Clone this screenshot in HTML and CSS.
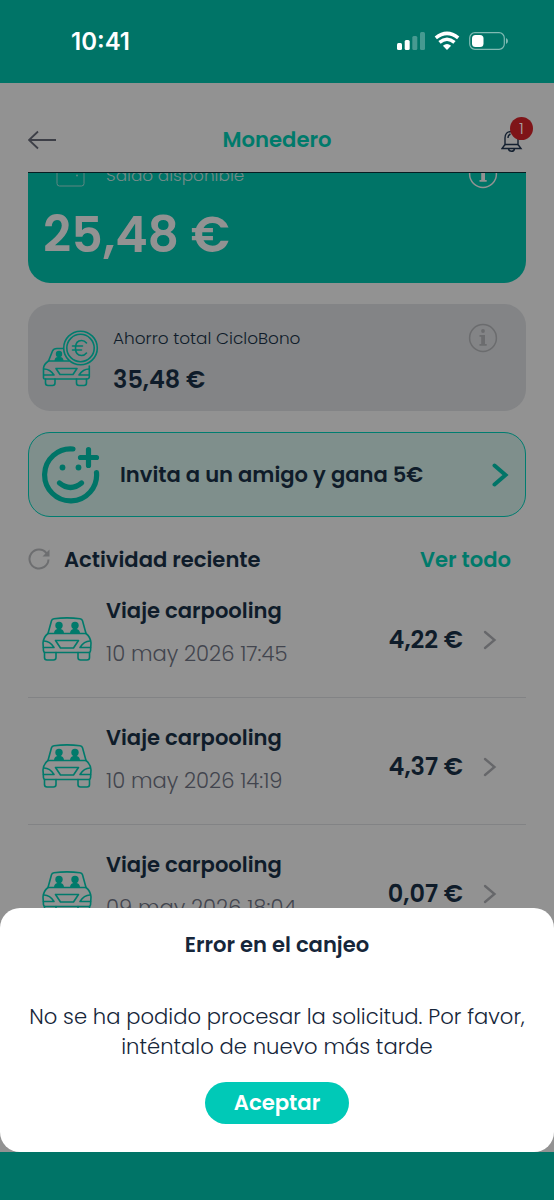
FILE: index.html
```html
<!DOCTYPE html>
<html lang="es">
<head>
<meta charset="utf-8">
<meta name="viewport" content="width=device-width, initial-scale=1">
<title>Monedero</title>
<link rel="stylesheet" href="styles.css">
</head>
<body>
<svg class="defs" aria-hidden="true">
  <symbol id="car" viewBox="0 0 50 44">
    <g fill="none" stroke="currentColor" stroke-width="1.6" stroke-linejoin="round" stroke-linecap="round">
      <path d="M6 16.500 L9.500 3.800 Q10 2 12 1.700 Q25 0 38 1.700 Q40 2 40.500 3.800 L44 16.500"/>
      <path d="M6 16.500 H44 Q48.500 20 49 26 L48.500 34 Q48.300 35.500 46.500 35.500 H3.500 Q1.700 35.500 1.500 34 L1 26 Q1.500 20 6 16.500Z"/>
      <path d="M13.500 23.500 H36.500 L31.500 31 H18.500Z"/>
      <path d="M2 24 Q8 24 12 30.500 H1.500 M48 24 Q42 24 38 30.500 H48.500"/>
      <path d="M2.500 35.500 V40.500 Q2.500 43 5 43 H11.500 Q14 43 14 40.500 V35.500 M36 35.500 V40.500 Q36 43 38.500 43 H45 Q47.500 43 47.500 40.500 V35.500"/>
    </g>
    <g fill="currentColor"><circle cx="17" cy="8.500" r="3.700"/><circle cx="33" cy="8.500" r="3.700"/><path d="M12 16.500 Q12 12.500 15.500 12 V10 H18.500 V12 Q22 12.500 22 16.500Z M28 16.500 Q28 12.500 31.500 12 V10 H34.500 V12 Q38 12.500 38 16.500Z"/></g>
  </symbol>
  <symbol id="info" viewBox="0 0 30 30">
    <circle cx="15" cy="15" r="13.400" fill="none" stroke="currentColor" stroke-width="1.500"/>
    <circle cx="15" cy="8" r="1.900" fill="currentColor"/>
    <path d="M11.500 12 H17 V21 H18.700 V22.800 H11.500 V21 H13.200 V13.700 H11.500Z" fill="currentColor"/>
  </symbol>
  <symbol id="chevron" viewBox="0 0 14 20"><path d="M2 2 L11.500 10 L2 18" fill="none" stroke="currentColor" stroke-width="2.300" stroke-linecap="round"/></symbol>
</svg>
<div class="screen">
  <div class="status">
    <span class="time">10:41</span>
    <svg class="indicators" viewBox="0 0 112 20">
      <g fill="#fff">
        <rect x="0" y="12" width="5" height="7" rx="1.500"/><rect x="7.700" y="9" width="5" height="10" rx="1.500"/>
        <rect x="15.300" y="5" width="5" height="14" rx="1.500" opacity=".28"/><rect x="23" y="1" width="5" height="18" rx="1.500" opacity=".28"/>
        <rect x="75" y="4" width="11.500" height="12" rx="3.500"/>
      </g>
      <g fill="none" stroke="#fff" stroke-width="3.600"><path d="M38.800 6.800 Q50 -2.200 61.200 6.800"/><path d="M42.500 11.300 Q50 5.200 57.500 11.300"/></g>
      <path d="M45.900 14.800 Q50 11.400 54.100 14.800 L50 19Z" fill="#fff"/>
      <rect x="72.700" y="1.700" width="34.600" height="16.600" rx="5.200" fill="none" stroke="#fff" stroke-width="1.200" opacity=".5"/>
      <path d="M109 7 Q111 8 111 10 Q111 12 109 13Z" fill="#fff" opacity=".5"/>
    </svg>
  </div>
  <header class="header">
    <svg class="back" viewBox="0 0 30 20"><path d="M10 1.500 L1 10 L10 18.500 M1 10 H28" fill="none" stroke="currentColor" stroke-width="1.800"/></svg>
    <h1 class="title">Monedero</h1>
    <div class="bell">
      <svg viewBox="0 0 22 24"><path d="M4 17.500 V10 Q4 3.500 10.500 3.500 Q17 3.500 17 10 V17.500 M4 16.500 H17 L20 20.500 H1 L4 16.500 M7.500 21 Q8 23.300 10.500 23.300 Q13 23.300 13.500 21 M7 10 Q7 7 9.500 6" fill="none" stroke="currentColor" stroke-width="1.400"/></svg>
      <span class="badge">1</span>
    </div>
  </header>
  <main class="content">
    <section class="balance">
      <div class="balance-head">
        <svg class="wallet" viewBox="0 0 30 26"><rect x="1" y="1" width="27" height="24" rx="2.500" fill="none" stroke="currentColor" stroke-width="1"/><circle cx="21" cy="14.500" r="1" fill="currentColor"/></svg>
        <span class="balance-label">Saldo disponible</span>
        <svg class="info"><use href="#info"/></svg>
      </div>
      <div class="balance-value">25,48 €</div>
    </section>
    <section class="saving">
      <svg class="saving-icon" viewBox="0 0 58 58">
        <g fill="none" stroke="currentColor" stroke-width="1.600" stroke-linejoin="round" stroke-linecap="round">
          <path d="M21 18.500 H15 Q11.500 18.500 10.500 21 L6.500 31 H27"/>
          <path d="M6.500 31 Q2 34 1.500 38 V48 Q1.500 49 3 49 H45 Q47 49 47.300 47 V36"/>
          <path d="M14 38.500 H35 L31 44.500 H18Z M2 39 Q8 39 12 45 H2 M47 39 Q41 39 37 45 H47 M3.500 49 V53 Q3.500 55.500 6 55.500 H10.500 Q13 55.500 13 53 V49 M34.500 49 V53 Q34.500 55.500 37 55.500 H42 Q44.500 55.500 44.500 53 V49"/>
          <circle cx="38.500" cy="18" r="16.800"/><circle cx="38.500" cy="18" r="13.700"/>
          <path d="M44.500 13 Q42.500 10.500 39.500 10.500 Q33.500 10.500 33.500 18 Q33.500 25.500 39.500 25.500 Q42.500 25.500 44.500 23 M30.500 16 H40.500 M30.500 20 H39.500"/>
        </g>
        <g fill="currentColor"><circle cx="17" cy="24" r="3.200"/><path d="M12.500 31 Q12.500 27 16 27 H18 Q21.500 27 21.500 31Z"/></g>
      </svg>
      <div class="saving-text"><span class="saving-label">Ahorro total CicloBono</span><strong class="saving-value">35,48 €</strong></div>
      <svg class="info muted"><use href="#info"/></svg>
    </section>
    <section class="invite">
      <svg class="smile" viewBox="0 0 58 58"><g fill="none" stroke="currentColor" stroke-width="5.200" stroke-linecap="round"><path d="M31 3 A26 26 0 1 0 54.500 26.500 M17.500 37 Q28.500 46 39.500 37 M46.500 3.500 V19.500 M38.500 11.500 H54.500"/></g><circle cx="20.500" cy="21.500" r="2.900" fill="currentColor"/><circle cx="36.500" cy="21.500" r="2.900" fill="currentColor"/></svg>
      <span class="invite-text">Invita a un amigo y gana 5€</span>
      <svg class="invite-go" viewBox="0 0 17 24"><path d="M2.500 2.500 L13.500 12 L2.500 21.500" fill="none" stroke="currentColor" stroke-width="4" stroke-linecap="round"/></svg>
    </section>
    <div class="activity-head">
      <svg class="refresh" viewBox="0 0 22 22"><path d="M18.600 5.300 A9.500 9.500 0 1 0 20.500 11.500" fill="none" stroke="currentColor" stroke-width="2"/><path d="M21.500 1.500 V8.500 H14.500Z" fill="currentColor"/></svg>
      <h2 class="activity-title">Actividad reciente</h2>
      <a class="all">Ver todo</a>
    </div>
    <div class="trip"><svg class="car"><use href="#car"/></svg><div class="trip-text"><strong class="trip-name">Viaje carpooling</strong><span class="trip-date">10 may 2026 17:45</span></div><span class="amount">4,22 €</span><svg class="chevron"><use href="#chevron"/></svg></div>
    <div class="trip"><svg class="car"><use href="#car"/></svg><div class="trip-text"><strong class="trip-name">Viaje carpooling</strong><span class="trip-date">10 may 2026 14:19</span></div><span class="amount">4,37 €</span><svg class="chevron"><use href="#chevron"/></svg></div>
    <div class="trip"><svg class="car"><use href="#car"/></svg><div class="trip-text"><strong class="trip-name">Viaje carpooling</strong><span class="trip-date">09 may 2026 18:04</span></div><span class="amount">0,07 €</span><svg class="chevron"><use href="#chevron"/></svg></div>
  </main>
  <div class="sheet" role="dialog">
    <h2 class="sheet-title">Error en el canjeo</h2>
    <p class="sheet-text">No se ha podido procesar la solicitud. Por favor,<br>inténtalo de nuevo más tarde</p>
    <button class="accept">Aceptar</button>
  </div>
  <div class="bottom"></div>
</div>
</body>
</html>
```
FILE: styles.css
```css
* { box-sizing: border-box; margin: 0; padding: 0; }
body { font-family: Poppins, Inter, "Open Sans", sans-serif; color: #0f1c2a; background: #929292; }
.defs { position: absolute; width: 0; height: 0; }
svg { display: block; flex: none; }
span, strong, a, h1, h2, p { white-space: nowrap; }
.screen { position: relative; width: 554px; height: 1200px; overflow: hidden; display: flex; flex-direction: column; }
.status { height: 83px; flex: none; background: #007467; display: flex; justify-content: space-between; align-items: flex-start; padding: 31px 45px 0 71px; }
.time { color: #fff; font: 600 24px/22px Inter, sans-serif; letter-spacing: 0; }
.indicators { width: 112px; height: 20px; }
.header { height: 89px; flex: none; display: grid; grid-template-columns: 60px 1fr 60px; align-items: center; padding: 24px 28px 0; }
.back { width: 30px; height: 20px; color: #3d3f47; }
.title { font-size: 21.150px; font-weight: 600; color: #007a6b; text-align: center; line-height: 30px; }
.bell { position: relative; justify-self: end; width: 25px; height: 24px; color: #142030; }
.bell svg { width: 22px; height: 24px; }
.badge { position: absolute; left: 9px; top: -11px; width: 23px; height: 23px; border-radius: 50%; background: #7f1418; color: #a9a0a0; font-size: 16.500px; font-weight: 300; line-height: 23px; text-align: center; }
.content { flex: 1; min-height: 0; overflow: hidden; padding: 0 28px; }
.balance { height: 111px; background: #007467; border-top: 1px solid #071d22; border-radius: 0 0 22px 22px; padding: 0 28px 0 15px; color: #929292; overflow: hidden; }
.balance-head { display: flex; align-items: flex-end; height: 30px; margin-top: -14px; }
.wallet { width: 30px; height: 26px; margin: 0 0 2px 13px; opacity: .65; }
.balance-label { flex: 1; font-size: 16.900px; font-weight: 300; line-height: 24px; margin: 0 0 2px 20px; opacity: .8; }
.info { width: 30px; height: 30px; }
.balance-value { font-size: 49px; font-weight: 600; line-height: 60px; margin-top: 16px; }
.saving { height: 107px; margin-top: 21px; border-radius: 22px; background: #838486; display: flex; padding: 18px 28px 18px 14px; }
.saving-icon { width: 58px; height: 58px; margin-top: 8px; color: #007c6e; }
.saving-text { flex: 1; margin-left: 13px; display: flex; flex-direction: column; }
.saving-label { font-size: 16.900px; font-weight: 300; line-height: 30px; margin-top: 1px; }
.saving-value { font-size: 24px; font-weight: 600; line-height: 34px; margin-top: 10px; }
.muted { color: #6b6c6e; margin-top: 1px; }
.invite { height: 85px; margin-top: 21px; border-radius: 22px; border: 1.500px solid #007d70; background: #7f8f8c; display: flex; align-items: center; padding: 0 16px 0 13px; }
.smile { width: 58px; height: 58px; color: #007467; }
.invite-text { flex: 1; margin-left: 20px; font-size: 21.100px; font-weight: 600; }
.invite-go { width: 17px; height: 24px; color: #007467; }
.activity-head { display: flex; align-items: center; height: 30px; margin-top: 27px; padding-right: 15px; }
.refresh { width: 22px; height: 22px; color: #6d6e70; }
.activity-title { flex: 1; margin-left: 14px; font-size: 21.100px; font-weight: 600; }
.all { font-size: 21.100px; font-weight: 600; color: #007a6b; }
.trip { height: 127px; display: flex; align-items: flex-start; padding: 20px 29px 0 14px; border-bottom: 1.500px solid #828385; }
.activity-head + .trip { height: 124px; padding-top: 17px; }
.car { width: 50px; height: 44px; margin-top: 26px; color: #007a6b; }
.trip-text { flex: 1; margin-left: 14px; display: flex; flex-direction: column; gap: 13px; margin-top: 5px; }
.trip-name { font-size: 21.100px; font-weight: 600; line-height: 30px; }
.trip-date { font-size: 21.100px; font-weight: 300; line-height: 30px; color: #42454e; }
.amount { font-size: 24px; font-weight: 600; line-height: 30px; margin-top: 34px; }
.chevron { width: 14px; height: 20px; margin: 39px 0 0 20px; color: #66676a; }
.sheet { position: absolute; left: 0; right: 0; top: 908px; height: 244px; background: #fff; border-radius: 20px; padding-top: 22px; display: flex; flex-direction: column; align-items: center; }
.sheet-title { font-size: 21.100px; font-weight: 600; line-height: 30px; color: #16263a; }
.sheet-text { margin-top: 42px; font-size: 21.130px; font-weight: 300; line-height: 29.500px; text-align: center; color: #16263a; }
.accept { margin-top: 21px; width: 144px; height: 42px; border: 0; border-radius: 22px; background: #00c9b7; color: #fff; font: inherit; font-size: 21.200px; font-weight: 600; line-height: 42px; }
.bottom { height: 48px; flex: none; background: #007467; }
```
